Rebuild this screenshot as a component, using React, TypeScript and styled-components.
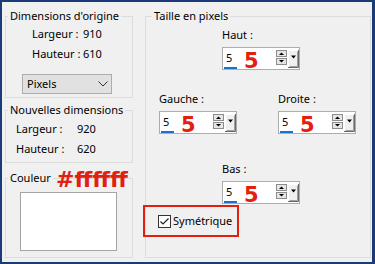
import styled, { createGlobalStyle } from "styled-components";

const GlobalStyle = createGlobalStyle`
  html, body {
    margin: 0;
    padding: 0;
    background: #f0f0f0;
  }
  body {
    font-family: "Noto Sans", "Open Sans", sans-serif;
    font-size: 11px;
    color: #000;
  }
`;

const Frame = styled.div`
  box-sizing: border-box;
  width: 375px;
  height: 264px;
  background: #f0f0f0;
  border: 2px solid #1b3b78;
  border-right-width: 3px;
  display: flex;
  gap: 12px;
  padding: 6px 1px 0 3px;
`;

const Column = styled.div`
  display: flex;
  flex-direction: column;
  width: 128px;
`;

const Group = styled.fieldset<{ $h: number; $w?: number; $mt?: number }>`
  box-sizing: border-box;
  margin: ${(p) => p.$mt ?? 0}px 0 0 0;
  padding: 0;
  min-width: 0;
  width: ${(p) => p.$w ?? 128}px;
  height: ${(p) => p.$h}px;
  border: 1px solid #dcdcdc;
`;

const Legend = styled.legend<{ $ml?: number }>`
  position: relative;
  margin-left: ${(p) => p.$ml ?? 2}px;
  padding: 0 2px;
  line-height: 16px;
`;

const Annotation = styled.span`
  position: absolute;
  left: 48px;
  top: -1px;
  font-family: "DejaVu Sans", sans-serif;
  font-weight: bold;
  font-size: 22px;
  line-height: 22px;
  color: #e3200f;
  white-space: nowrap;
`;

const InfoGrid = styled.div<{ $left: number; $col: number; $top: number }>`
  display: grid;
  grid-template-columns: ${(p) => p.$col}px auto;
  row-gap: 4px;
  line-height: 16px;
  margin: ${(p) => p.$top}px 0 0 ${(p) => p.$left}px;
`;

const Combo = styled.div`
  box-sizing: border-box;
  width: 90px;
  height: 20px;
  margin: 12px 0 0 16px;
  background: #e1e1e1;
  border: 1px solid #adadad;
  display: flex;
  align-items: center;
  justify-content: space-between;
  padding: 0 3px 0 4px;
  line-height: 16px;
`;

const Swatch = styled.div`
  box-sizing: border-box;
  width: 97px;
  height: 59px;
  margin: 6px 0 0 14px;
  background: #fff;
  border: 1px solid #a5a5a5;
`;

const Field = styled.div<{ $mt: number; $ml?: number }>`
  display: flex;
  flex-direction: column;
  gap: 4px;
  margin: ${(p) => p.$mt}px 0 0 ${(p) => p.$ml ?? 0}px;
  line-height: 16px;
`;

const PairRow = styled.div`
  display: flex;
  justify-content: space-between;
  padding: 0 14px 0 13px;
  margin-top: 21px;
`;

const SpinBox = styled.div`
  box-sizing: border-box;
  width: 78px;
  height: 23px;
  border: 1px solid #abadb3;
  background: #fff;
  display: flex;
  align-items: flex-start;
`;

const SpinValue = styled.span`
  box-sizing: border-box;
  width: 13px;
  height: 21px;
  margin-left: 1px;
  padding-left: 2px;
  line-height: 19px;
  border-bottom: 2px solid #1a73c8;
`;

const RedMark = styled.span`
  margin: 3px 0 0 7px;
  font-family: "DejaVu Sans", sans-serif;
  font-weight: bold;
  font-size: 21px;
  line-height: 21px;
  color: #e3200f;
`;

const SpinButtons = styled.div`
  display: flex;
  gap: 1px;
  margin: 2px 0 0 auto;
`;

const CheckFrame = styled.label`
  box-sizing: border-box;
  display: flex;
  align-items: center;
  gap: 2px;
  width: 96px;
  height: 32px;
  margin: 1px 0 0 -3px;
  padding-left: 13px;
  border: 2px solid #e3200f;
  line-height: 16px;
`;

const CheckBox = styled.span`
  box-sizing: border-box;
  display: flex;
  width: 13px;
  height: 13px;
  border: 1px solid #333;
  background: #fff;
`;

const Spinner = () => (
  <SpinButtons>
    <svg width="11" height="15" viewBox="0 0 11 15">
      <rect x="0.5" y="0.5" width="10" height="6" fill="#e6e6e6" stroke="#8c8c8c" />
      <rect x="0.5" y="8.5" width="10" height="6" fill="#e6e6e6" stroke="#8c8c8c" />
      <path d="M3 5h5L5.5 2.5z" fill="#000" />
      <path d="M3 10h5l-2.5 2.5z" fill="#000" />
    </svg>
    <svg width="11" height="18" viewBox="0 0 11 18">
      <rect width="11" height="18" fill="#f0f0f0" />
      <path d="M0.5 17.5V0.5H10.5" stroke="#fff" fill="none" />
      <path d="M0 17.5H10.5V0" stroke="#696969" fill="none" />
      <path d="M1.5 16.5H9.5V1.5" stroke="#a0a0a0" fill="none" />
      <path d="M3 5.5h5l-2.5 3z" fill="#000" />
    </svg>
  </SpinButtons>
);

const Spin = ({ value }: { value: string }) => (
  <SpinBox>
    <SpinValue>{value}</SpinValue>
    <RedMark>{value}</RedMark>
    <Spinner />
  </SpinBox>
);

const App = () => {
  return (
    <>
      <GlobalStyle />
      <Frame>
        <Column>
          <Group $h={90}>
            <Legend>Dimensions d'origine</Legend>
            <InfoGrid $left={26} $col={51} $top={2}>
              <span>Largeur :</span>
              <span>910</span>
              <span>Hauteur :</span>
              <span>610</span>
            </InfoGrid>
            <Combo>
              <span>Pixels</span>
              <svg width="10" height="6" viewBox="0 0 10 6">
                <path d="M0.5 0.5L5 5L9.5 0.5" stroke="#333" fill="none" />
              </svg>
            </Combo>
          </Group>
          <Group $h={61} $mt={4}>
            <Legend>Nouvelles dimensions</Legend>
            <InfoGrid $left={10} $col={61} $top={3}>
              <span>Largeur :</span>
              <span>920</span>
              <span>Hauteur :</span>
              <span>620</span>
            </InfoGrid>
          </Group>
          <Group $h={88} $mt={7}>
            <Legend>
              Couleur
              <Annotation>#ffffff</Annotation>
            </Legend>
            <Swatch />
          </Group>
        </Column>
        <Group $h={250} $w={226}>
          <Legend $ml={6}>Taille en pixels</Legend>
          <Field $mt={3} $ml={76}>
            <span>Haut :</span>
            <Spin value="5" />
          </Field>
          <PairRow>
            <Field $mt={0}>
              <span>Gauche :</span>
              <Spin value="5" />
            </Field>
            <Field $mt={0}>
              <span>Droite :</span>
              <Spin value="5" />
            </Field>
          </PairRow>
          <Field $mt={27} $ml={76}>
            <span>Bas :</span>
            <Spin value="5" />
          </Field>
          <CheckFrame>
            <CheckBox>
              <svg width="11" height="11" viewBox="0 0 11 11">
                <path d="M1.5 5.5L4 8L9.5 2.5" stroke="#222" strokeWidth="1.2" fill="none" />
              </svg>
            </CheckBox>
            <span>Symétrique</span>
          </CheckFrame>
        </Group>
      </Frame>
    </>
  );
};

export default App;
